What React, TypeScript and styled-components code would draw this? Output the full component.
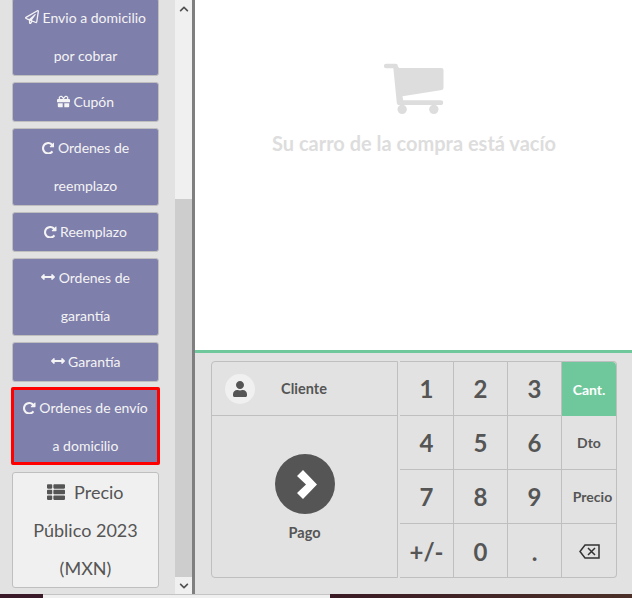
import React from 'react';
import styled, { createGlobalStyle } from 'styled-components';
import { FaRegPaperPlane, FaGift, FaArrowsAltH, FaThList, FaUser, FaChevronUp, FaChevronDown } from 'react-icons/fa';

const GlobalStyle = createGlobalStyle`
  html, body {
    margin: 0;
    padding: 0;
    height: 100%;
    overflow: hidden;
    background: #e2e2e2;
    font-family: Lato, "Open Sans", sans-serif;
  }
  #root { height: 100%; }
  * { box-sizing: border-box; }
`;

const Page = styled.div`
  display: flex;
  flex-direction: column;
  width: 632px;
  height: 598px;
`;

const Main = styled.div`
  display: flex;
  height: 594px;
`;

const LeftPane = styled.div`
  display: flex;
  width: 195px;
  border-right: 3px solid #7f7f7f;
`;

const ButtonList = styled.div`
  display: flex;
  flex-direction: column;
  justify-content: flex-end;
  gap: 6px;
  width: 175px;
  height: 594px;
  padding: 0 16px 6px 12px;
  overflow: hidden;
`;

const ActionButton = styled.div<{ $selected?: boolean }>`
  flex: none;
  padding: ${({ $selected }) => ($selected ? '1px 8px 0' : '0 8px')};
  background: #7f7fab;
  border: 1px solid #bfbfbf;
  border-radius: 3px;
  color: #f4f4f4;
  font-size: 14px;
  line-height: 38px;
  text-align: center;
  ${({ $selected }) => $selected && `
    height: 78px;
    margin: -1px -1px 1px;
    border-radius: 2px;
    outline: 3px solid #ff0000;
    outline-offset: -3px;
  `}

  svg {
    vertical-align: -1px;
  }
`;

const RepeatIcon = styled.svg`
  width: 12.5px;
  height: 12.5px;
  fill: currentColor;
`;

const PriceButton = styled.div`
  flex: none;
  padding: 0 8px;
  background: #f0f0f0;
  border: 1px solid #bfbfbf;
  border-radius: 3px;
  color: #555555;
  font-size: 18px;
  line-height: 38px;
  text-align: center;

  svg {
    font-size: 18px;
    margin-right: 4px;
    vertical-align: -2px;
  }
`;

const ScrollBar = styled.div`
  display: flex;
  flex-direction: column;
  width: 17px;
  background: #f0f0f0;
`;

const ScrollArrow = styled.div`
  display: flex;
  flex: none;
  align-items: center;
  justify-content: center;
  height: 17px;
  color: #505050;

  svg { font-size: 10px; }
`;

const ScrollTrack = styled.div`
  display: flex;
  flex: 1;
  align-items: flex-end;
`;

const ScrollThumb = styled.div`
  width: 100%;
  height: 378px;
  background: #cdcdcd;
`;

const RightPane = styled.div`
  display: flex;
  flex: 1;
  flex-direction: column;
`;

const CartArea = styled.div`
  display: flex;
  flex-direction: column;
  align-items: center;
  height: 350px;
  padding-top: 63px;
  background: #ffffff;
`;

const CartIcon = styled.svg`
  display: block;
  width: 62px;
  height: 52px;
  fill: #dddddd;
`;

const EmptyText = styled.div`
  margin-top: 13px;
  color: #dddddd;
  font-size: 20px;
  font-weight: 700;
  line-height: 30px;
`;

const PadArea = styled.div`
  display: flex;
  flex: 1;
  gap: 2px;
  padding: 8px 16px 0;
  border-top: 3px solid #6ec89b;
`;

const ActionPanel = styled.div`
  display: flex;
  flex-direction: column;
  width: 187px;
  height: 217px;
  border: 1px solid #bfbfbf;
  border-radius: 4px 0 0 4px;
`;

const CustomerRow = styled.div`
  display: flex;
  flex: none;
  align-items: center;
  height: 54px;
  padding-left: 13px;
  border-bottom: 1px solid #bfbfbf;
`;

const Avatar = styled.div`
  display: flex;
  align-items: center;
  justify-content: center;
  width: 30px;
  height: 30px;
  border-radius: 50%;
  background: #f0f0f0;
  color: #555555;

  svg { font-size: 16px; }
`;

const CustomerName = styled.div`
  flex: 1;
  padding-right: 44px;
  color: #555555;
  font-size: 14.5px;
  font-weight: 700;
  text-align: center;
`;

const PayBlock = styled.div`
  display: flex;
  flex: 1;
  flex-direction: column;
  align-items: center;
  padding-top: 38px;
`;

const PayCircle = styled.div`
  display: flex;
  align-items: center;
  justify-content: center;
  width: 60px;
  height: 60px;
  border-radius: 50%;
  background: #555555;
`;

const ChevronIcon = styled.svg`
  display: block;
  width: 20px;
  height: 29px;
  margin-left: 4px;
  fill: #ffffff;
`;

const PayLabel = styled.div`
  margin-top: 10px;
  color: #555555;
  font-size: 14.5px;
  font-weight: 700;
  line-height: 17px;
`;

const NumPad = styled.div`
  display: grid;
  grid-template-columns: repeat(4, 54px);
  grid-auto-rows: 54px;
  height: 217px;
  border-top: 1px solid #bfbfbf;
  border-right: 1px solid #bfbfbf;
  border-bottom: 1px solid #bfbfbf;
  border-radius: 0 4px 4px 0;
`;

const PadKey = styled.div<{ $small?: boolean; $active?: boolean; $lastCol?: boolean; $lastRow?: boolean; $shift?: number }>`
  display: flex;
  align-items: center;
  justify-content: center;
  padding-left: ${({ $shift }) => $shift ?? 0}px;
  background: ${({ $active }) => ($active ? '#6ec89b' : 'transparent')};
  border-right: ${({ $lastCol }) => ($lastCol ? 'none' : '1px solid #bfbfbf')};
  border-bottom: ${({ $lastRow, $active }) => ($lastRow || $active ? 'none' : '1px solid #bfbfbf')};
  border-top-right-radius: ${({ $active }) => ($active ? '4px' : '0')};
  color: ${({ $active }) => ($active ? '#ffffff' : '#555555')};
  font-size: ${({ $small }) => ($small ? '14px' : '24px')};
  font-weight: 700;
  white-space: nowrap;
`;

const BackspaceIcon = styled.svg`
  display: block;
  width: 21px;
  height: 15px;
  fill: none;
  stroke: #333333;
  stroke-width: 1.5;
`;

const BottomStrip = styled.div`
  display: flex;
  height: 4px;
`;

const StripDark = styled.div`
  width: 43px;
  background: #3a1a28;
`;

const StripLight = styled.div`
  width: 287px;
  background: #f0f0f0;
  border-top: 1px solid #c4c4c4;
`;

const StripBrown = styled.div`
  flex: 1;
  background: linear-gradient(90deg, #3a1a24, #4a3028);
`;

const Repeat = () => (
  <RepeatIcon viewBox="0 0 1536 1536">
    <path
      transform="matrix(1 0 0 -1 0 1408)"
      d="M1536 1280v-448q0 -26 -19 -45t-45 -19h-448q-42 0 -59 40q-17 39 14 69l138 138q-148 137 -349 137q-104 0 -198.5 -40.5t-163.5 -109.5t-109.5 -163.5t-40.5 -198.5t40.5 -198.5t109.5 -163.5t163.5 -109.5t198.5 -40.5q119 0 225 52t179 147q7 10 23 12q14 0 25 -9l137 -137q9 -8 9.5 -20.5t-7.5 -22.5q-109 -132 -264 -204.5t-327 -72.5q-156 0 -298 61t-245 164t-164 245t-61 298t61 298t164 245t245 164t298 61q147 0 284.5 -55.5t244.5 -156.5l130 129q29 31 70 14q39 -17 39 -59z"
    />
  </RepeatIcon>
);

const keys = [
  { label: '1' }, { label: '2' }, { label: '3' }, { label: 'Cant.', small: true, active: true },
  { label: '4' }, { label: '5' }, { label: '6' }, { label: 'Dto', small: true },
  { label: '7' }, { label: '8' }, { label: '9' }, { label: 'Precio', small: true, shift: 7 },
  { label: '+/-' }, { label: '0' }, { label: '.' }, { label: '', small: true },
];

export default function App() {
  return (
    <Page>
      <GlobalStyle />
      <Main>
        <LeftPane>
          <ButtonList>
            <ActionButton><FaRegPaperPlane size={14} /> Envio a domicilio por cobrar</ActionButton>
            <ActionButton><FaGift size={13} /> Cupón</ActionButton>
            <ActionButton><Repeat /> Ordenes de reemplazo</ActionButton>
            <ActionButton><Repeat /> Reemplazo</ActionButton>
            <ActionButton><FaArrowsAltH size={14} /> Ordenes de garantía</ActionButton>
            <ActionButton><FaArrowsAltH size={14} /> Garantía</ActionButton>
            <ActionButton $selected><Repeat /> Ordenes de envío a domicilio</ActionButton>
            <PriceButton><FaThList /> Precio Público 2023 (MXN)</PriceButton>
          </ButtonList>
          <ScrollBar>
            <ScrollArrow><FaChevronUp /></ScrollArrow>
            <ScrollTrack><ScrollThumb /></ScrollTrack>
            <ScrollArrow><FaChevronDown /></ScrollArrow>
          </ScrollBar>
        </LeftPane>
        <RightPane>
          <CartArea>
            <CartIcon viewBox="370 40 185 156">
              <rect x="372" y="42" width="42" height="14" rx="7" />
              <path d="M400 50h14l4 5h127q6 0 6 6v54q0 5-5 6l-118 19 2 12h112q8 0 8 7t-8 7H416q-4 0-5-5z" />
              <circle cx="427" cy="179" r="14" />
              <circle cx="522" cy="179" r="14" />
            </CartIcon>
            <EmptyText>Su carro de la compra está vacío</EmptyText>
          </CartArea>
          <PadArea>
            <ActionPanel>
              <CustomerRow>
                <Avatar><FaUser /></Avatar>
                <CustomerName>Cliente</CustomerName>
              </CustomerRow>
              <PayBlock>
                <PayCircle>
                  <ChevronIcon viewBox="0 0 20 29">
                    <polygon points="6,0 20,14.5 6,29 0,23 9,14.5 0,6" />
                  </ChevronIcon>
                </PayCircle>
                <PayLabel>Pago</PayLabel>
              </PayBlock>
            </ActionPanel>
            <NumPad>
              {keys.map((key, i) => (
                <PadKey
                  key={i}
                  $small={key.small}
                  $active={key.active}
                  $shift={key.shift}
                  $lastCol={i % 4 === 3}
                  $lastRow={i >= 12}
                >
                  {key.label || (
                    <BackspaceIcon viewBox="0 0 21 15">
                      <path d="M6 1h14v13H6L1 7.5z" />
                      <path d="M9 4l7 7M16 4l-7 7" />
                    </BackspaceIcon>
                  )}
                </PadKey>
              ))}
            </NumPad>
          </PadArea>
        </RightPane>
      </Main>
      <BottomStrip>
        <StripDark />
        <StripLight />
        <StripBrown />
      </BottomStrip>
    </Page>
  );
}
